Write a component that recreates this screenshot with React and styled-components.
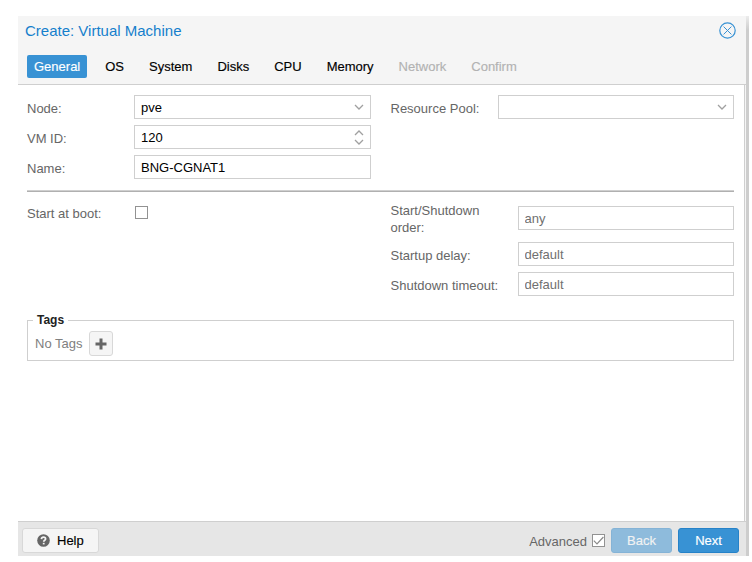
import React, { useState } from 'react';
import styled, { createGlobalStyle, css } from 'styled-components';

const GlobalStyle = createGlobalStyle`
  *, *::before, *::after {
    box-sizing: border-box;
  }

  body {
    margin: 0;
    background: #fff;
    color: #000;
    font-family: "Liberation Sans", Arial, Helvetica, sans-serif;
    font-size: 13px;
    line-height: 17px;
  }

  button, input, select {
    font: inherit;
  }
`;

const Page = styled.div`
  display: flex;
  min-height: 100vh;
  padding: 16px 3px 6px 18px;
`;

const Window = styled.main`
  flex: 1;
  display: flex;
  flex-direction: column;
  min-width: 0;
  background: #f5f5f5;
`;

// Soft edge on the right side of the dialog
const WindowEdge = styled.div`
  width: 3px;
  background: linear-gradient(#ececec, #cdcdcd 14px);
`;

const Header = styled.header`
  border-bottom: 1px solid #cfcfcf;
  padding-bottom: 6px;
`;

const TitleBar = styled.div`
  display: flex;
  align-items: center;
  justify-content: space-between;
  height: 28px;
  padding: 0 10px 0 7px;
  margin-bottom: 11px;
`;

const Title = styled.h1`
  margin: 0;
  color: #157fcc;
  font-size: 15px;
  font-weight: 400;
`;

const IconButton = styled.button`
  display: flex;
  padding: 0;
  border: 0;
  background: none;
  color: #3892d4;
`;

const Tabs = styled.nav`
  display: flex;
  gap: 11px;
  padding: 0 9px;
`;

const Tab = styled.button`
  height: 23px;
  padding: 0 7px;
  border: 0;
  border-radius: 2px;
  background: none;
  color: #000;
  -webkit-text-stroke: 0.15px currentColor;

  ${({ $active }) => $active && css`
    background: #3892d4;
    color: #fff;
  `}

  &:disabled {
    color: #b2b2b2;
  }
`;

const Body = styled.section`
  flex: 1;
  margin-right: 1px;
  padding: 10px 10px 10px 9px;
  border-right: 1px solid #cfcfcf;
  background: #fff;
`;

const Columns = styled.div`
  display: grid;
  grid-template-columns: 1fr 1fr;
  gap: 20px;
`;

const Column = styled.div`
  display: flex;
  flex-direction: column;
  gap: 6px;
`;

const Row = styled.div`
  display: grid;
  grid-template-columns: ${({ $wide }) => ($wide ? '127px' : '107px')} 1fr;
  align-items: center;
  min-height: 24px;
`;

const Label = styled.label`
  padding: 2px 5px 0 0;
  color: #666;
`;

const Control = styled.div`
  position: relative;
  display: flex;
`;

const fieldStyle = css`
  width: 100%;
  height: 24px;
  padding: 0 6px;
  border: 1px solid #cfcfcf;
  border-radius: 0;
  background: #fff;
  color: #000;
  appearance: none;
  outline: none;
`;

const Input = styled.input`
  ${fieldStyle}

  &::placeholder {
    color: #707070;
    opacity: 1;
  }
`;

const Select = styled.select`
  ${fieldStyle}
`;

const Trigger = styled.span`
  position: absolute;
  top: 0;
  right: 7px;
  bottom: 0;
  display: flex;
  flex-direction: column;
  align-items: center;
  justify-content: center;
  gap: 3px;
  color: #a0a0a0;
  pointer-events: none;
`;

const Check = styled.input`
  display: grid;
  place-content: center;
  width: 13px;
  height: 13px;
  margin: 0;
  border: 1px solid #929292;
  background: #fff;
  appearance: none;
`;

const CheckBox = styled.span`
  position: relative;
  display: flex;
  padding-left: ${({ $inset }) => ($inset ? '1px' : '0')};

  svg {
    position: absolute;
    inset: 0;
    pointer-events: none;
  }
`;

const Separator = styled.hr`
  height: 2px;
  margin: 11px 0 8px;
  border: 0;
  border-top: 1px solid #cfcfcf;
  background: #b0b0b0;
`;

const Tags = styled.fieldset`
  min-width: 0;
  margin: 16px 0 0;
  padding: 2px 7px 4px;
  border: 1px solid #cfcfcf;

  legend {
    margin-left: -2px;
    padding: 0 4px;
    color: #222;
    font-size: 12px;
    font-weight: 700;
  }
`;

const TagList = styled.div`
  display: flex;
  align-items: center;
  gap: 7px;
  color: #808080;
`;

const Button = styled.button`
  display: flex;
  align-items: center;
  justify-content: center;
  gap: 7px;
  height: 25px;
  min-width: ${({ $small }) => ($small ? '24px' : '61px')};
  padding: 0 ${({ $small }) => ($small ? '0' : '14px')};
  border: 1px solid ${({ $primary }) => ($primary ? '#2682c8' : '#d8d8d8')};
  border-radius: 3px;
  background: ${({ $primary }) => ($primary ? '#3892d4' : '#f5f5f5')};
  color: ${({ $primary }) => ($primary ? '#fff' : '#000')};
  -webkit-text-stroke: 0.15px currentColor;

  svg {
    color: #666;
  }

  &:disabled {
    opacity: 0.5;
  }
`;

const Footer = styled.footer`
  display: flex;
  align-items: center;
  gap: 6px;
  height: 35px;
  padding: 3px 7px 0 4px;
  border-top: 1px solid #cfcfcf;
  background: #e6e6e6;
`;

const Advanced = styled.div`
  display: flex;
  align-items: center;
  margin-left: auto;
`;

function Chevron({ up }) {
  return (
    <svg width="10" height="6" viewBox="0 0 10 6" fill="none" stroke="currentColor" strokeWidth="1.3">
      <path d={up ? 'M1 5 5 1l4 4' : 'M1 1l4 4 4-4'} />
    </svg>
  );
}

function CloseIcon() {
  return (
    <svg width="17" height="17" viewBox="0 0 17 17" fill="none" stroke="currentColor">
      <circle cx="8.5" cy="8.5" r="7.7" strokeWidth="1.2" />
      <path d="M4.6 4.6l7.8 7.8M12.4 4.6l-7.8 7.8" />
    </svg>
  );
}

function PlusIcon() {
  return (
    <svg width="12" height="12" viewBox="0 0 12 12" fill="none" stroke="currentColor" strokeWidth="3">
      <path d="M6 .5v11M.5 6h11" />
    </svg>
  );
}

function HelpIcon() {
  return (
    <svg width="13" height="13" viewBox="0 0 13 13" fill="none">
      <circle cx="6.5" cy="6.5" r="6.3" fill="currentColor" />
      <path d="M4.4 5.1c.1-1.3.9-2 2.1-2s2.1.7 2.1 1.8c0 1.5-1.9 1.3-1.9 2.9" stroke="#f5f5f5" strokeWidth="1.7" />
      <path d="M5.8 8.8h1.8v1.6H5.8z" fill="#f5f5f5" />
    </svg>
  );
}

function Field({ id, label, wide, children }) {
  return (
    <Row $wide={wide}>
      <Label htmlFor={id}>{label}</Label>
      <Control>{children}</Control>
    </Row>
  );
}

const tabs = ['General', 'OS', 'System', 'Disks', 'CPU', 'Memory', 'Network', 'Confirm'];
const lockedTabs = ['Network', 'Confirm'];

export default function App() {
  const [active, setActive] = useState('General');
  const [advanced, setAdvanced] = useState(true);

  return (
    <>
      <GlobalStyle />
      <Page>
        <Window>
          <Header>
            <TitleBar>
              <Title>Create: Virtual Machine</Title>
              <IconButton type="button" aria-label="Close">
                <CloseIcon />
              </IconButton>
            </TitleBar>
            <Tabs>
              {tabs.map((tab) => (
                <Tab
                  key={tab}
                  type="button"
                  $active={tab === active}
                  disabled={lockedTabs.includes(tab)}
                  onClick={() => setActive(tab)}
                >
                  {tab}
                </Tab>
              ))}
            </Tabs>
          </Header>

          <Body>
            <Columns>
              <Column>
                <Field id="node" label="Node:">
                  <Select id="node" defaultValue="pve">
                    <option>pve</option>
                  </Select>
                  <Trigger><Chevron /></Trigger>
                </Field>
                <Field id="vmid" label="VM ID:">
                  <Input id="vmid" inputMode="numeric" defaultValue="120" />
                  <Trigger><Chevron up /><Chevron /></Trigger>
                </Field>
                <Field id="name" label="Name:">
                  <Input id="name" defaultValue="BNG-CGNAT1" />
                </Field>
              </Column>
              <Column>
                <Field id="pool" label="Resource Pool:">
                  <Select id="pool" defaultValue="">
                    <option value="" />
                  </Select>
                  <Trigger><Chevron /></Trigger>
                </Field>
              </Column>
            </Columns>

            <Separator />

            <Columns>
              <Column>
                <Row>
                  <Label htmlFor="onboot">Start at boot:</Label>
                  <CheckBox $inset>
                    <Check id="onboot" type="checkbox" />
                  </CheckBox>
                </Row>
              </Column>
              <Column>
                <Field id="order" label="Start/Shutdown order:" wide>
                  <Input id="order" placeholder="any" />
                </Field>
                <Field id="up" label="Startup delay:" wide>
                  <Input id="up" placeholder="default" />
                </Field>
                <Field id="down" label="Shutdown timeout:" wide>
                  <Input id="down" placeholder="default" />
                </Field>
              </Column>
            </Columns>

            <Tags>
              <legend>Tags</legend>
              <TagList>
                <span>No Tags</span>
                <Button type="button" $small aria-label="Add tag">
                  <PlusIcon />
                </Button>
              </TagList>
            </Tags>
          </Body>

          <Footer>
            <Button type="button">
              <HelpIcon />
              Help
            </Button>
            <Advanced>
              <Label htmlFor="advanced">Advanced</Label>
              <CheckBox>
                <Check
                  id="advanced"
                  type="checkbox"
                  checked={advanced}
                  onChange={(e) => setAdvanced(e.target.checked)}
                />
                {advanced && (
                  <svg width="13" height="13" viewBox="0 0 13 13" fill="none" stroke="#8a8a8a" strokeWidth="1.2">
                    <path d="M1.8 6.6l3.2 3.2 6.4-6.8" />
                  </svg>
                )}
              </CheckBox>
            </Advanced>
            <Button type="button" $primary disabled>Back</Button>
            <Button type="button" $primary>Next</Button>
          </Footer>
        </Window>
        <WindowEdge />
      </Page>
    </>
  );
}
